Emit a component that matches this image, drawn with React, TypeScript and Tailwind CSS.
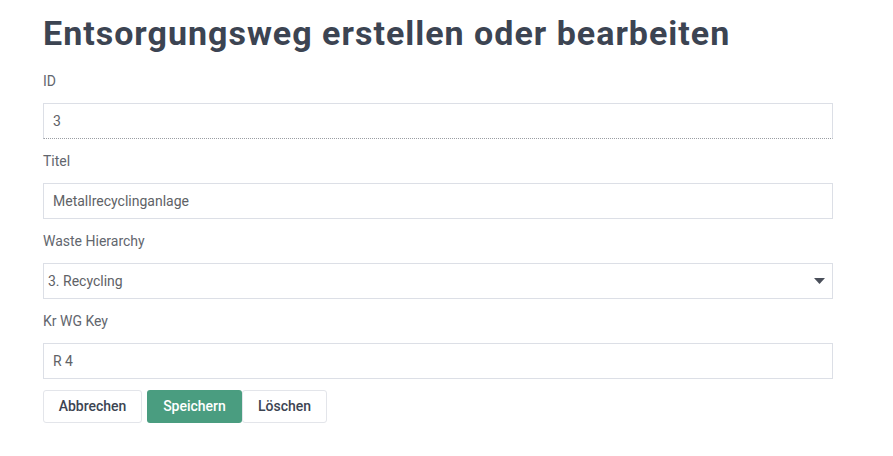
import React from "react";

const font = { fontFamily: "Roboto, 'Liberation Sans', sans-serif" };

function Field({ label, children }: { label: string; children: React.ReactNode }) {
  return (
    <div className="flex flex-col">
      <div className="h-[20px] leading-[20px] my-[12px] text-[14px] text-[#62666e]">{label}</div>
      {children}
    </div>
  );
}

export default function App() {
  return (
    <div className="w-[893px] h-[456px] bg-white" style={font}>
      <div className="pl-[43px] pr-[60px] pt-[12px]">
        <h1 className="text-[34px] leading-[42px] font-bold text-[#3c4452] tracking-[1px] whitespace-nowrap">
          Entsorgungsweg erstellen oder bearbeiten
        </h1>
        <div className="w-[790px] mt-[5px]">
          <Field label="ID">
            <div className="h-[36px] border border-[#dcdfe6] border-b-[#9a9da3] [border-bottom-style:dotted] flex items-center px-[9px] text-[14px] text-[#606266]">
              3
            </div>
          </Field>
          <Field label="Titel">
            <div className="h-[36px] border border-[#dcdfe6] flex items-center px-[9px] text-[14px] text-[#606266]">
              Metallrecyclinganlage
            </div>
          </Field>
          <Field label="Waste Hierarchy">
            <div className="h-[36px] border border-[#dcdfe6] flex items-center justify-between pl-[4px] pr-[7px] text-[14px] text-[#606266]">
              <span>3. Recycling</span>
              <svg width="11" height="6" viewBox="0 0 11 6">
                <path d="M0 0 L11 0 L5.5 6 Z" fill="#4a4f5a" />
              </svg>
            </div>
          </Field>
          <Field label="Kr WG Key">
            <div className="h-[36px] border border-[#dcdfe6] flex items-center px-[9px] text-[14px] text-[#606266]">
              R 4
            </div>
          </Field>
          <div className="flex mt-[11px]">
            <button className="w-[99px] h-[33px] border border-[#e3e5ea] rounded-[3px] bg-white text-[14px] font-medium text-[#3c4452]">
              Abbrechen
            </button>
            <button className="ml-[5px] w-[95px] h-[33px] rounded-[3px] bg-[#4a9d80] text-[14px] font-medium text-white">
              Speichern
            </button>
            <button className="w-[85px] h-[33px] border border-[#e3e5ea] rounded-[3px] bg-white text-[14px] font-medium text-[#3c4452]">
              Löschen
            </button>
          </div>
        </div>
      </div>
    </div>
  );
}
